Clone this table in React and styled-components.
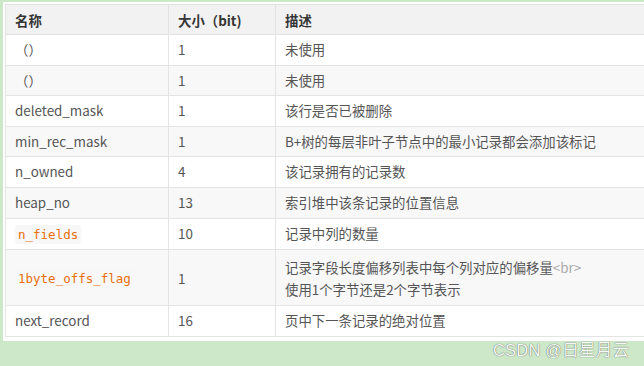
import React from "react";
import styled, { createGlobalStyle } from "styled-components";

const Global = createGlobalStyle`
  html, body { margin: 0; padding: 0; }
  body {
    background: #cce8c8;
    width: 644px;
    height: 366px;
    overflow: hidden;
    font-family: "Noto Sans CJK SC", "Noto Sans", sans-serif;
  }
`;

const Page = styled.div`
  position: relative;
  width: 644px;
  height: 366px;
  overflow: hidden;
  padding: 2px 0 0 3px;
  box-sizing: border-box;
`;

const Panel = styled.div`
  background: #ffffff;
  width: 720px;
  padding: 2px 0 4px 2px;
`;

const Table = styled.table`
  border-collapse: collapse;
  table-layout: fixed;
  width: 700px;
  font-size: 13.4px;
  color: #555555;
  border: 1px solid #e2e2e2;
`;

const HeadCell = styled.th`
  text-align: left;
  font-weight: 700;
  color: #363636;
  background: #f2f2f2;
  height: 30px;
  padding: 0 9px;
  border: 1px solid #e2e2e2;
  width: ${(p) => p.$w || "auto"};
  box-sizing: border-box;
`;

const Row = styled.tr`
  background: ${(p) => (p.$alt ? "#f8f8f9" : "#ffffff")};
`;

const Cell = styled.td`
  border: 1px solid #e4e4e4;
  padding: ${(p) => (p.$tall ? "5.5px 9px" : "4px 9px")};
  line-height: ${(p) => (p.$tall ? "22px" : "21.6px")};
  vertical-align: middle;
  white-space: nowrap;
`;

const Code = styled.code`
  font-family: "DejaVu Sans Mono", "Liberation Mono", monospace;
  font-size: 12.5px;
  font-weight: 500;
  color: #e8700c;
  background: #f7f7f7;
  padding: 2px 3px;
  border-radius: 2px;
`;

const Tag = styled.span`
  color: #aaaaaa;
`;

const Watermark = styled.div`
  position: absolute;
  left: 493px;
  top: 337px;
  font-family: "Liberation Sans", "Noto Sans CJK SC", sans-serif;
  font-size: 16.5px;
  color: #f6f6f6;
  text-shadow: 0 0 1px rgba(0, 0, 0, 0.5), 0 0 1px rgba(0, 0, 0, 0.3);
  letter-spacing: 0.2px;
`;

const rows = [
  { name: "（）", size: "1", desc: "未使用" },
  { name: "（）", size: "1", desc: "未使用" },
  { name: "deleted_mask", size: "1", desc: "该行是否已被删除" },
  { name: "min_rec_mask", size: "1", desc: "B+树的每层非叶子节点中的最小记录都会添加该标记" },
  { name: "n_owned", size: "4", desc: "该记录拥有的记录数" },
  { name: "heap_no", size: "13", desc: "索引堆中该条记录的位置信息" },
  { name: "n_fields", code: true, size: "10", desc: "记录中列的数量" },
  {
    name: "1byte_offs_flag",
    code: true,
    size: "1",
    tall: true,
    desc: (
      <>
        记录字段长度偏移列表中每个列对应的偏移量<Tag>&lt;br&gt;</Tag>
        <br />
        使用1个字节还是2个字节表示
      </>
    ),
  },
  { name: "next_record", size: "16", desc: "页中下一条记录的绝对位置" },
];

export default function App() {
  return (
    <Page>
      <Global />
      <Panel>
        <Table>
          <thead>
            <tr>
              <HeadCell $w="163px">名称</HeadCell>
              <HeadCell $w="107px">大小（bit)</HeadCell>
              <HeadCell>描述</HeadCell>
            </tr>
          </thead>
          <tbody>
            {rows.map((r, i) => (
              <Row key={i} $alt={i % 2 === 1}>
                <Cell $tall={r.tall}>{r.code ? <Code>{r.name}</Code> : r.name}</Cell>
                <Cell $tall={r.tall}>{r.size}</Cell>
                <Cell $tall={r.tall}>{r.desc}</Cell>
              </Row>
            ))}
          </tbody>
        </Table>
      </Panel>
      <Watermark>CSDN @日星月云</Watermark>
    </Page>
  );
}
